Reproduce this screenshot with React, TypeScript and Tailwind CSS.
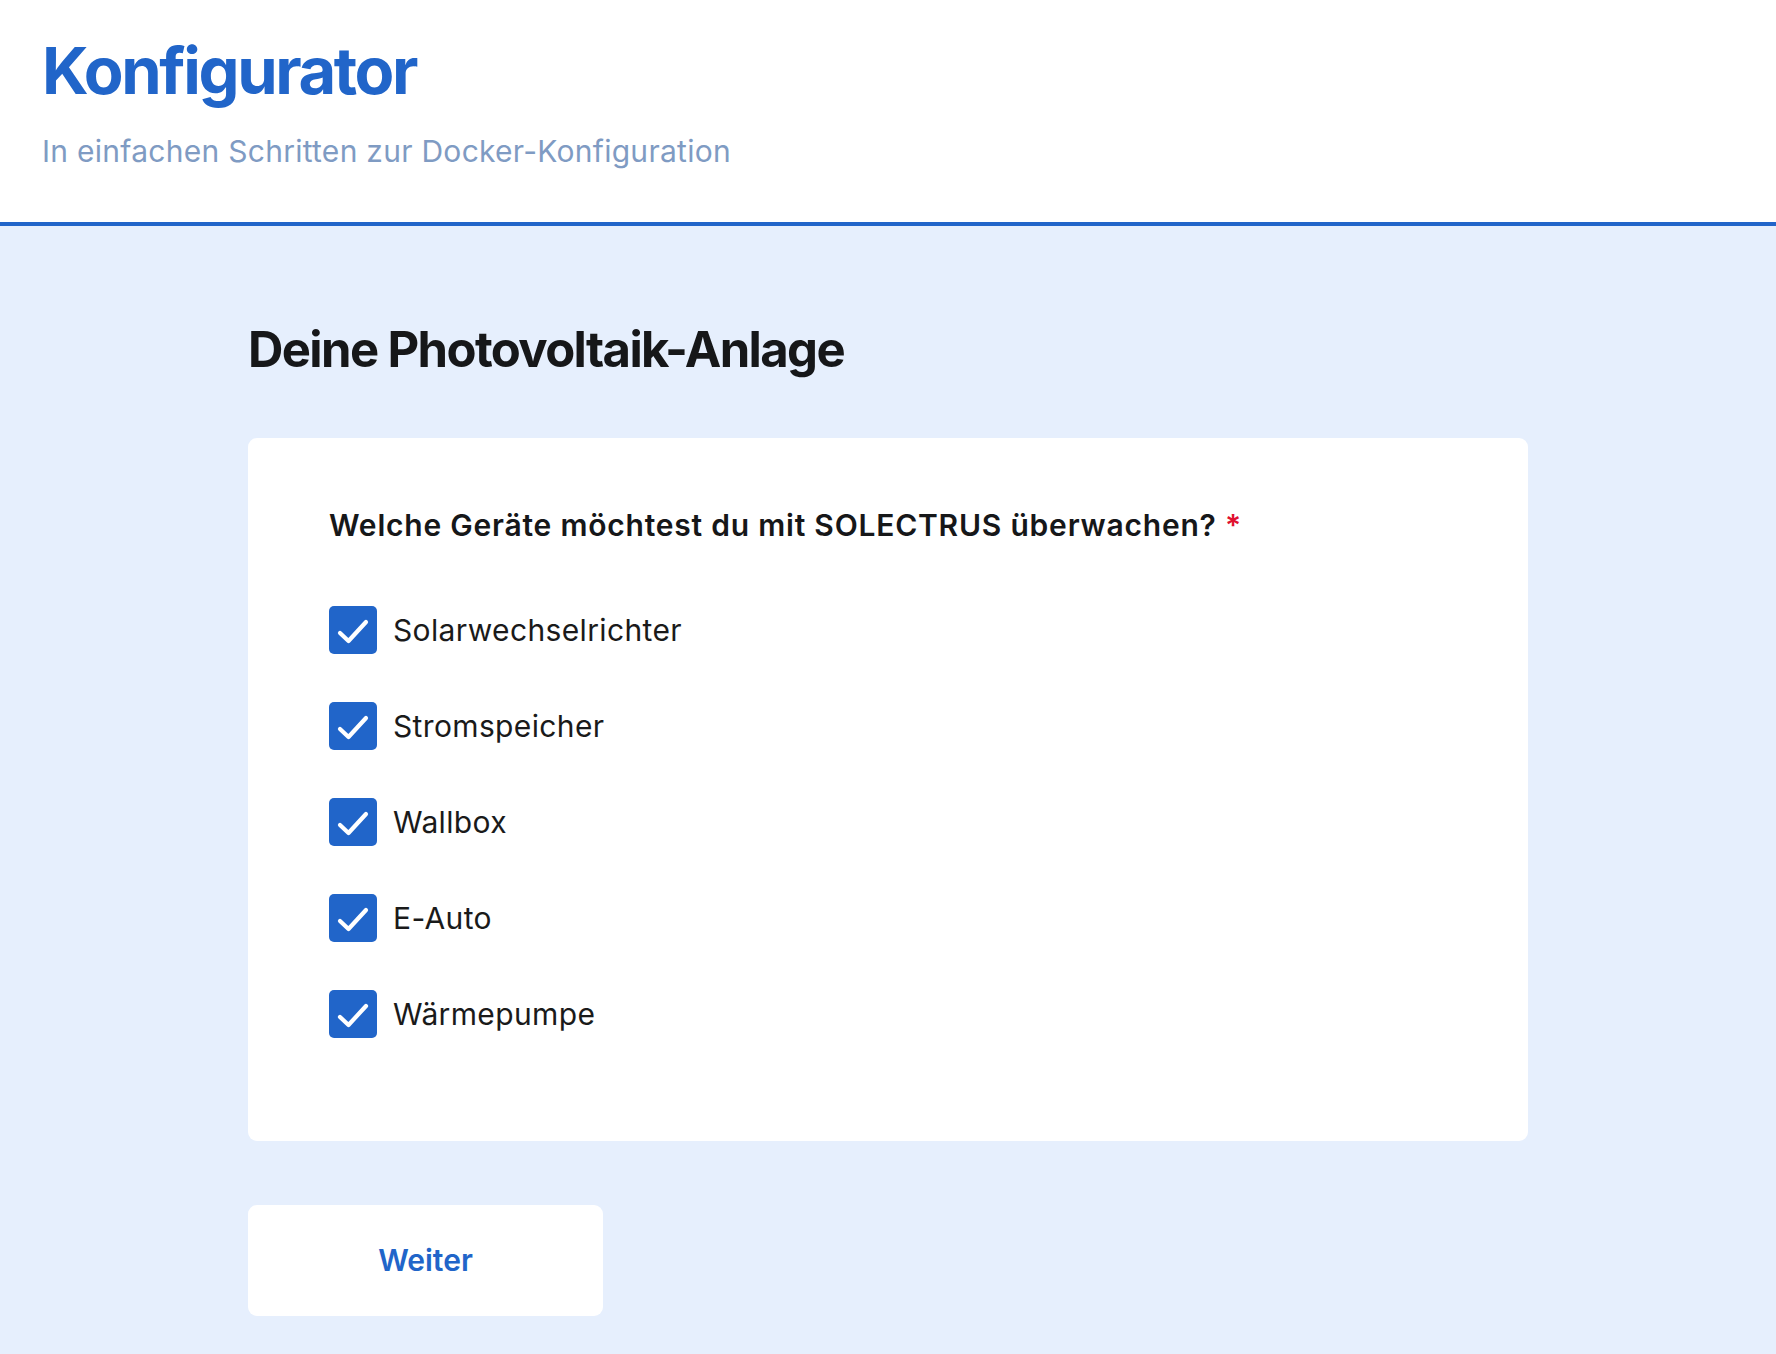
import React from "react";

const items = ["Solarwechselrichter", "Stromspeicher", "Wallbox", "E-Auto", "Wärmepumpe"];

function Check() {
  return (
    <span className="flex h-[48px] w-[48px] shrink-0 items-center justify-center rounded-[5px] bg-[#2165c9]">
      <svg width="48" height="48" viewBox="0 0 48 48" fill="none">
        <polyline points="11,27 19.5,35 37,16" stroke="#ffffff" strokeWidth="4.2" strokeLinecap="round" strokeLinejoin="round" />
      </svg>
    </span>
  );
}

export default function App() {
  return (
    <div className="min-h-screen bg-[#e6effd] font-['Inter',sans-serif]">
      <header className="h-[226px] border-b-4 border-[#2165c9] bg-white pl-[42px] pt-[38px]">
        <h1 className="text-[65px] font-bold leading-[66px] tracking-[-0.037em] text-[#2165c9]">Konfigurator</h1>
        <p className="mt-[25px] text-[30px] leading-[45px] tracking-[0.009em] text-[#7f9bc3]">In einfachen Schritten zur Docker-Konfiguration</p>
      </header>
      <main className="mx-auto w-[1280px] pt-[98px] pb-[38px]">
        <h2 className="text-[49px] font-bold leading-[51px] tracking-[-0.033em] text-[#161719]">Deine Photovoltaik-Anlage</h2>
        <section className="mt-[63px] rounded-[9px] bg-white px-[81px] pt-[65px] pb-[103px]">
          <p className="text-[30px] font-semibold leading-[45px] tracking-[0.026em] text-[#161719]">
            Welche Geräte möchtest du mit SOLECTRUS überwachen? <span className="text-[#e0102f]">*</span>
          </p>
          <ul className="mt-[58px] flex flex-col gap-[48px]">
            {items.map((it) => (
              <li key={it} className="flex items-center gap-[16px]">
                <Check />
                <span className="text-[30px] leading-[45px] tracking-[0.012em] text-[#1a1a1a]">{it}</span>
              </li>
            ))}
          </ul>
        </section>
        <button className="mt-[64px] flex h-[111px] w-[355px] items-center justify-center rounded-[9px] bg-white text-[30px] font-semibold text-[#2165c9]">
          Weiter
        </button>
      </main>
    </div>
  );
}
